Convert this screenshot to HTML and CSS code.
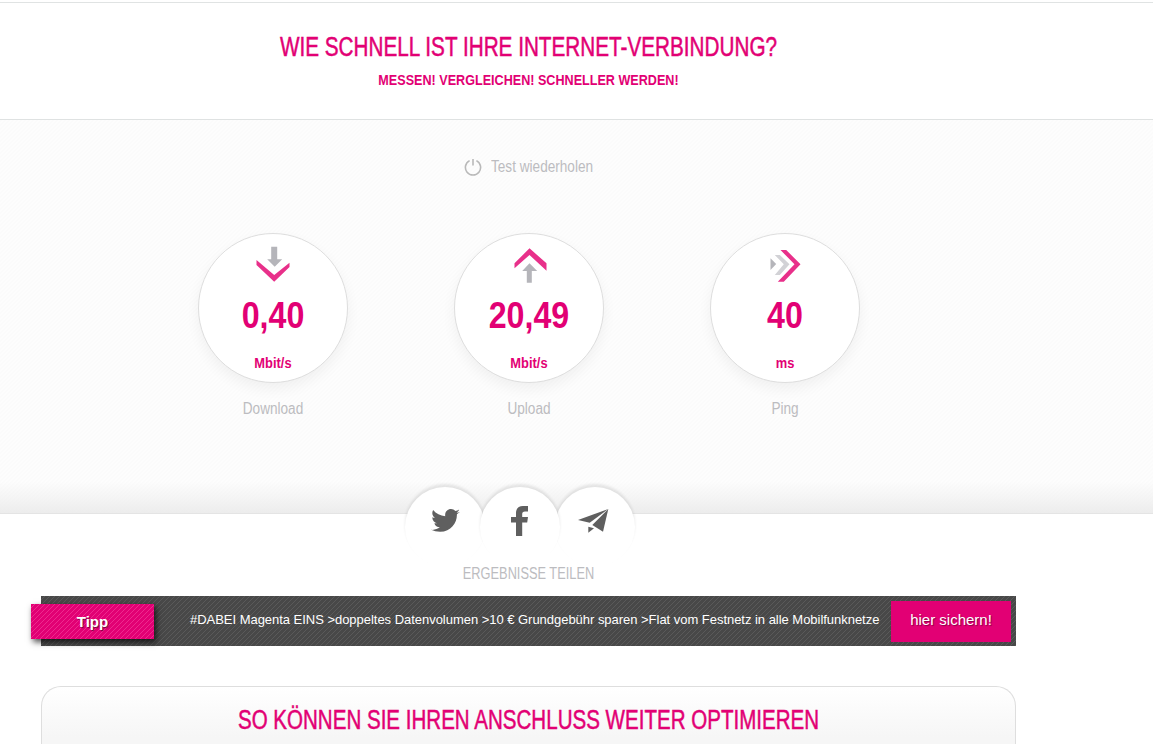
FILE: index.html
```html
<!DOCTYPE html>
<html lang="de">
<head>
  <meta charset="UTF-8" />
  <title>Speedtest</title>
  <link rel="stylesheet" href="styles.css">
</head>
<body>

  <header class="page-head">
    <div class="wrap">
      <h1>WIE SCHNELL IST IHRE INTERNET-VERBINDUNG?</h1>
      <h2>MESSEN! VERGLEICHEN! SCHNELLER WERDEN!</h2>
    </div>
  </header>

  <section class="results">
    <div class="wrap">
      <div class="repeat">
        <svg class="power-icon" width="18" height="18" viewBox="0 0 18 18" fill="none" stroke="#b9b9b9" stroke-width="1.6">
          <path d="M5.6 2.6a7.6 7.6 0 1 0 6.8 0"/>
          <path d="M9 1v6.5"/>
        </svg>
        <span>Test wiederholen</span>
      </div>

      <div class="gauges">
        <div class="gauge">
          <div class="circle">
            <svg class="gauge-icon" width="36" height="36" viewBox="0 0 36 36">
              <path fill="#b5b5ba" d="M16.200 .7h6v12.600h5l-7.500 7.400-7.500-7.400h4z"/>
              <path fill="#e8308a" d="M1.500 14l17.700 15 15.300-12.300V21L19.200 35.700 1.500 19z"/>
            </svg>
            <div class="value">0,40</div>
            <div class="unit">Mbit/s</div>
          </div>
          <div class="label">Download</div>
        </div>
        <div class="gauge">
          <div class="circle">
            <svg class="gauge-icon" width="36" height="36" viewBox="0 0 36 36">
              <path fill="#e8308a" d="M18.500 2.300l17 15v7.400L18.500 9 3.500 22.300v-5z"/>
              <path fill="#b5b5ba" d="M18.500 17.300l7.700 7.700h-5.400v11.700h-5V25h-4.600z"/>
            </svg>
            <div class="value">20,49</div>
            <div class="unit">Mbit/s</div>
          </div>
          <div class="label">Upload</div>
        </div>
        <div class="gauge">
          <div class="circle">
            <svg class="gauge-icon" width="36" height="36" viewBox="0 0 36 36">
              <path fill="#b5b5ba" d="M3.500 12.300l5.700 5.700-5.700 6z"/>
              <path fill="#d2d2d6" d="M7.800 9h5l9.700 9.300L12.800 29h-5l9-10.700z"/>
              <path fill="#e8308a" d="M13.500 4h5.700l14.300 14.300-16.700 17.400h-6l16.700-17.400z"/>
            </svg>
            <div class="value">40</div>
            <div class="unit">ms</div>
          </div>
          <div class="label">Ping</div>
        </div>
      </div>
    </div>
  </section>

  <div class="wrap">
    <div class="share">
      <div class="share-btn">
        <svg width="29" height="24" viewBox="0 0 24 20" fill="#5f5f5f">
          <path d="M24 2.400c-.9.400-1.800.700-2.800.800 1-.6 1.800-1.600 2.200-2.700-1 .6-2 1-3.100 1.200C19.300.6 18 0 16.600 0c-2.700 0-4.900 2.200-4.900 4.900 0 .4 0 .8.100 1.100C7.700 5.800 4.100 3.800 1.700.900c-.4.700-.7 1.600-.7 2.500 0 1.700.9 3.200 2.200 4.100-.8 0-1.600-.2-2.200-.6v.1c0 2.400 1.700 4.400 3.900 4.800-.7.200-1.500.2-2.200.1.600 2 2.400 3.400 4.600 3.400-1.700 1.300-3.800 2.100-6.100 2.100-.4 0-.8 0-1.200-.1C2.200 18.200 4.800 19 7.500 19c9.100 0 14-7.500 14-14v-.6c1-.7 1.800-1.500 2.500-2z"/>
        </svg>
      </div>
      <div class="share-btn share-btn-mid">
        <svg class="fb-icon" width="17" height="30" viewBox="0 0 17 30" fill="#5f5f5f">
          <path d="M5 30V16.500H0V11h5V7c0-4.500 2.700-7 6.800-7H17v5.500h-3c-2 0-2.800 1-2.800 2.500v3H17l-.8 5.500h-5V30z"/>
        </svg>
      </div>
      <div class="share-btn">
        <svg class="plane-icon" width="31" height="24" viewBox="0 0 31 24" fill="#5f5f5f">
          <path d="M30.300 0L0 11l11.700 2.700z"/>
          <path d="M30.300 0L14.300 16l10.700 6.700z"/>
          <path d="M10.300 17.700v6l5.700-4.400z"/>
        </svg>
      </div>
    </div>
    <div class="share-title">ERGEBNISSE TEILEN</div>

    <div class="tip-bar">
      <div class="tip-badge">Tipp</div>
      <div class="tip-text">#DABEI Magenta EINS &gt;doppeltes Datenvolumen &gt;10 € Grundgebühr sparen &gt;Flat vom Festnetz in alle Mobilfunknetze</div>
      <a class="tip-btn">hier sichern!</a>
    </div>

    <div class="optimize">
      <h2>SO KÖNNEN SIE IHREN ANSCHLUSS WEITER OPTIMIEREN</h2>
    </div>
  </div>

</body>
</html>
```

FILE: styles.css
```css
* {
  box-sizing: border-box;
}

html, body {
  height: 744px;
  overflow: hidden;
}

body {
  font-family: "Liberation Sans", Arial, sans-serif;
  background: #fff;
  margin: 0;
  color: #e20074;
}

.wrap {
  width: 1057px;
}

/* the original font is a condensed one, so the text gets squeezed */
.page-head h1, .page-head h2, .value, .unit, .label, .share-title, .optimize h2 {
  transform: scaleX(.767);
}

.page-head {
  height: 118px;
  margin-top: 2px;
  border-top: 1px solid #e0e3e3;
  border-bottom: 1px solid #dfe2e2;
  text-align: center;
}

.page-head h1 {
  margin: 0;
  padding-top: 28px;
  font-size: 27px;
  line-height: 32px;
  font-weight: normal;
  -webkit-text-stroke: .5px #e20074;
}

.page-head h2 {
  margin: 8px 0 0;
  font-size: 15px;
  line-height: 18px;
  font-weight: bold;
  transform: scaleX(.84);
}

.results {
  height: 394px;
  background:
    linear-gradient(to bottom, rgba(236,236,236,0) 0, rgba(236,236,236,0) 362px, #ececec 394px),
    linear-gradient(135deg, #fbfbfb 25%, #fdfdfd 25%, #fdfdfd 50%, #fbfbfb 50%, #fbfbfb 75%, #fdfdfd 75%) 0 0 / 4px 4px;
  border-bottom: 1px solid #e4e4e4;
}

.repeat {
  display: flex;
  justify-content: center;
  align-items: center;
  gap: 9px;
  padding-top: 38px;
  height: 56px;
  color: #bcbcc0;
  font-size: 16px;
}

.repeat span {
  width: 102px;
  white-space: nowrap;
  transform: scaleX(.85);
  transform-origin: left;
}

.gauges {
  display: flex;
  justify-content: center;
  margin-top: 57px;
}

.gauge {
  width: 256px;
  text-align: center;
}

.circle {
  width: 150px;
  height: 150px;
  margin: 0 auto;
  padding-top: 12px;
  background: #fff;
  border: 1px solid #dedede;
  border-radius: 50%;
  box-shadow: 0 6px 14px rgba(0,0,0,0.05);
}

.gauge-icon {
  display: block;
  margin: 0 auto;
  overflow: visible;
}

.value {
  margin-top: 12px;
  font-size: 37px;
  line-height: 44px;
  font-weight: bold;
  transform: scaleX(.87);
}

.unit {
  margin-top: 16px;
  font-size: 15px;
  line-height: 18px;
  font-weight: bold;
  transform: scaleX(.86);
}

.label {
  margin-top: 16px;
  color: #bcbcc0;
  font-size: 16px;
  line-height: 20px;
  transform: scaleX(.85);
}

.share {
  display: flex;
  justify-content: center;
  height: 77px;
  margin-top: -27px;
  padding-right: 17px;
  position: relative;
}

.share-btn {
  display: flex;
  align-items: center;
  justify-content: center;
  flex: none;
  width: 80px;
  height: 80px;
  margin: 0 -2.5px;
  padding-bottom: 12px;
  background: #fff;
  border-radius: 50%;
  box-shadow: 0 -3px 3px rgba(0,0,0,0.09);
}

.share-btn-mid {
  position: relative;
  padding-right: 2px;
}

.plane-icon {
  margin-right: 3px;
}

.share-title {
  text-align: center;
  color: #bcbcc0;
  font-size: 16px;
  line-height: 20px;
  transform: scaleX(.8);
}

.tip-bar {
  display: flex;
  align-items: center;
  width: 975px;
  height: 50px;
  margin: 12px 0 0 41px;
  background: linear-gradient(135deg, #484848 40%, #5a5a5a 40%, #5a5a5a 50%, #484848 50%, #484848 90%, #5a5a5a 90%) 0 0 / 5px 5px;
  position: relative;
}

.tip-badge {
  position: absolute;
  left: -10px;
  top: 8px;
  width: 123px;
  height: 35px;
  background: linear-gradient(135deg, #e20074 40%, #ec2b8e 40%, #ec2b8e 50%, #e20074 50%, #e20074 90%, #ec2b8e 90%) 0 0 / 5px 5px;
  box-shadow: 2px 3px 6px rgba(0,0,0,0.7);
  color: #fff;
  font-size: 15px;
  font-weight: bold;
  line-height: 35px;
  text-align: center;
  text-shadow: 1px 1px 1px rgba(0,0,0,0.5);
}

.tip-text {
  margin-left: 149px;
  padding-bottom: 3px;
  color: #fff;
  font-size: 13px;
  letter-spacing: -.03px;
  white-space: nowrap;
}

.tip-btn {
  display: block;
  width: 120px;
  height: 41px;
  margin-left: auto;
  margin-right: 5px;
  background: #e20074;
  color: #fff;
  font-size: 15px;
  line-height: 37px;
  text-align: center;
  text-shadow: 1px 1px 1px rgba(0,0,0,0.4);
}

.optimize {
  width: 975px;
  height: 58px;
  margin: 40px 0 0 41px;
  padding-top: 18px;
  background: linear-gradient(to bottom, #fff 0, #f6f6f6 50px);
  border: 1px solid #dedede;
  border-bottom: 0;
  border-radius: 20px 20px 0 0;
  text-align: center;
}

.optimize h2 {
  margin: 0;
  font-size: 27px;
  line-height: 30px;
  font-weight: normal;
  transform: scaleX(.761);
  -webkit-text-stroke: .5px #e20074;
}
```
